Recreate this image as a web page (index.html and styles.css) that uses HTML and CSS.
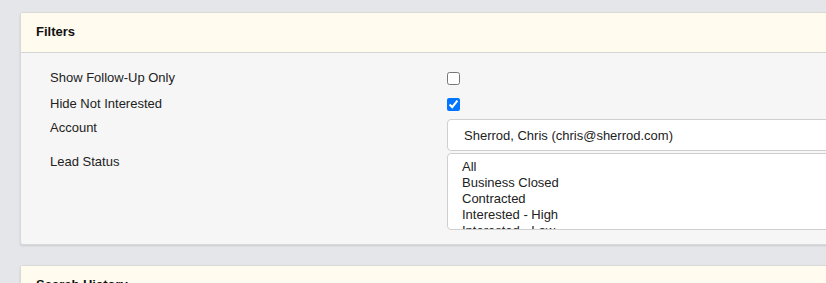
FILE: index.html
```html
<!DOCTYPE html>
<html>
<head>
<meta charset="utf-8">
<link rel="stylesheet" href="styles.css">
</head>
<body>
<div class="page">
  <section class="card">
    <div class="card-header">Filters</div>
    <div class="card-body">
      <div class="row row-check">
        <label class="lbl">Show Follow-Up Only</label>
        <div class="ctl"><input type="checkbox" class="chk"></div>
      </div>
      <div class="row row-check">
        <label class="lbl">Hide Not Interested</label>
        <div class="ctl"><input type="checkbox" class="chk" checked></div>
      </div>
      <div class="row row-account">
        <label class="lbl">Account</label>
        <div class="ctl"><div class="select">Sherrod, Chris (chris@sherrod.com)</div></div>
      </div>
      <div class="row">
        <label class="lbl">Lead Status</label>
        <div class="ctl">
          <div class="listbox">
            <div class="opt">All</div>
            <div class="opt">Business Closed</div>
            <div class="opt">Contracted</div>
            <div class="opt">Interested - High</div>
            <div class="opt">Interested - Low</div>
            <div class="opt">Not Interested</div>
          </div>
        </div>
      </div>
    </div>
  </section>
  <section class="card card-next">
    <div class="card-header">Search History</div>
  </section>
</div>
</body>
</html>
```

FILE: styles.css
```css
html, body {
  margin: 0;
  padding: 0;
  overflow: hidden;
  background: #e4e6ea;
  font-family: "Liberation Sans", Arial, sans-serif;
  font-size: 13px;
  color: #212529;
}
.page {
  padding: 12px 0 0 20px;
  width: 1000px;
}
.card {
  background: #f6f6f6;
  border: 1px solid #d9d9d9;
  border-radius: 3px 0 0 3px;
  box-shadow: 0 1px 2px rgba(0,0,0,0.12);
}
.card-next {
  margin-top: 20px;
}
.card-header {
  background: #fffbee;
  height: 39px;
  line-height: 38px;
  padding: 0 15px;
  font-weight: bold;
  border-bottom: 1px solid #d3d3d3;
  color: #111;
}
.card-body {
  padding: 16px 0 14px 29px;
  display: flex;
  flex-direction: column;
}
.row {
  display: grid;
  grid-template-columns: 397px 1fr;
  align-items: start;
}
.row-check {
  margin-bottom: 7px;
}
.row-check + .row-check {
  margin-bottom: 5px;
}
.row-account {
  margin-bottom: 2px;
}
.lbl {
  line-height: 16px;
  padding-top: 1px;
  color: #222;
}
.chk {
  margin: 3px 0;
  width: 13px;
  height: 13px;
  display: block;
}
.select {
  height: 30px;
  line-height: 31px;
  border: 1px solid #cfcfcf;
  border-radius: 4px;
  background: #fff;
  padding-left: 16px;
  color: #222;
}
.listbox {
  border: 1px solid #cfcfcf;
  border-radius: 4px;
  background: #fff;
  padding: 5px 0 0 14px;
  box-sizing: border-box;
  height: 77px;
  overflow: hidden;
}
.opt {
  line-height: 16px;
  color: #222;
}
```
